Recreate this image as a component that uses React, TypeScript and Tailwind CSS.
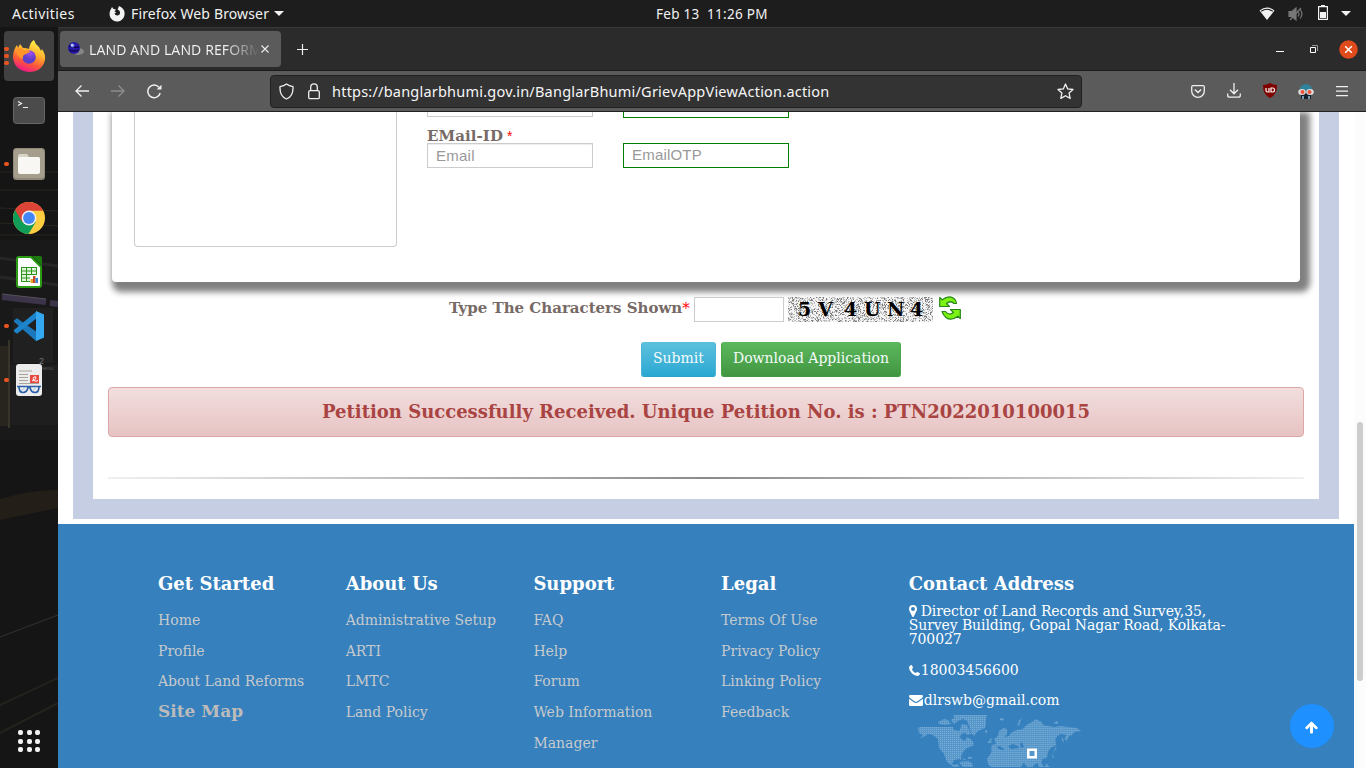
import React from "react";

const UI = "font-['Noto_Sans',sans-serif]";
const SERIF = "font-['DejaVu_Serif',serif]";

/* ---------- top system bar ---------- */

function SystemBar() {
  return (
    <header className={`flex h-[27px] shrink-0 items-center bg-[#1d1d1d] text-[14px] leading-[27px] text-[#f2f2f2] ${UI}`}>
      <div className="w-[109px] pl-3 tracking-[0.45px]">Activities</div>
      <svg width="16" height="16" viewBox="0 0 16 16" fill="#f2f2f2">
        <path d="M2 3 L3 1 L4.5 3 L7 3.4 L5.5 5.4 L7.4 6.4 L5.6 7.2 C6 9.8 9.5 10.3 10.8 8 C11.6 6.2 10.5 4.2 8.6 3.6 L10 0 C14 1.6 16 4.8 15.6 8.4 C15 12.8 11.6 15.6 7.8 15.4 C3.6 15.2 .5 12 .6 8 C.6 6 1 4.6 2 3Z" />
      </svg>
      <div className="ml-[6px] w-[138px] whitespace-nowrap tracking-[0.14px]">Firefox Web Browser</div>
      <svg className="ml-[5px]" width="10" height="6" viewBox="0 0 10 6" fill="#f2f2f2"><path d="M0 0h10L5 5z" /></svg>
      <div className="ml-[372px] w-[112px] whitespace-pre text-[13.500px] leading-[26px] tracking-[0.27px]">Feb 13  11:26 PM</div>
      <div className="ml-auto flex items-center pr-[15px]">
        <svg width="16" height="14" viewBox="0 0 16 14"><path d="M.5 3.6Q8-2.4 15.5 3.6L8 13z" fill="#f2f2f2" /><path d="M2.2 4.3Q8 .3 13.8 4.3" stroke="#1d1d1d" strokeWidth="1.1" fill="none" /></svg>
        <svg className="ml-[13px]" width="16" height="14" viewBox="0 0 16 14" fill="none" stroke="#777" strokeWidth="1.2">
          <path d="M1 4.5h3L8 1v12L4 9.5H1z" fill="#777" /><path d="M10 4.5q2 2.5 0 5M12.2 2.5q3.4 4.5 0 9M2 13L13 1" />
        </svg>
        <svg className="ml-[14px] -mt-[2px]" width="10" height="15" viewBox="0 0 10 15"><path d="M3 0h4v1H3zM0 1h10v14H0zM1.200 2.200v11.600h7.600V2.200z" fill="#f2f2f2" fillRule="evenodd" /><path d="M2 7h6v6H2z" fill="#f2f2f2" /></svg>
        <svg className="ml-[13px]" width="10" height="5" viewBox="0 0 10 5" fill="#f2f2f2"><path d="M0 0h10L5 5z" /></svg>
      </div>
    </header>
  );
}

/* ---------- dock ---------- */

const FirefoxIcon = () => (
  <svg width="34" height="34" viewBox="0 0 34 34">
    <defs>
      <linearGradient id="ff" x1=".75" y1="0" x2=".35" y2="1">
        <stop offset="0" stopColor="#fff44f" /><stop offset=".4" stopColor="#ffb52e" /><stop offset=".7" stopColor="#ff5a36" /><stop offset="1" stopColor="#f0158a" />
      </linearGradient>
      <radialGradient id="fp" cx=".6" cy=".2"><stop offset="0" stopColor="#a24cf0" /><stop offset="1" stopColor="#5b3fc8" /></radialGradient>
    </defs>
    <path d="M3 9 L5 6 L6 9 L8 5 L11 9 Q15 9 17 10 Q18 3 22 1 Q23 5 27 8 Q28 10 29 12 L30 10 Q34 16 33 21 Q30 33 17 33 Q3 32 1 19 Q1 13 3 9Z" fill="url(#ff)" />
    <circle cx="17" cy="18" r="6.800" fill="url(#fp)" />
    <path d="M4 11 Q8 7 12 11 Q17 10 18 13 L14 15 Q10 16 11 20 Q5 18 4 11Z" fill="#ff9528" />
  </svg>
);
const TerminalIcon = () => (
  <svg width="32" height="27" viewBox="0 0 32 27"><rect x=".5" y=".5" width="31" height="26" rx="3" fill="#4b4b4b" stroke="#676767" /><path d="M5 4.5l3.500 2L5 8.500M10 10.500h5" stroke="#eee" strokeWidth="1.200" fill="none" /></svg>
);
const FilesIcon = () => (
  <svg width="32" height="32" viewBox="0 0 32 32"><rect width="32" height="32" rx="3.500" fill="#918a7a" /><rect y="1" x="1" width="30" height="29" rx="3" fill="#a59e8d" /><path d="M5 8q0-2 2-2h7l2 3h9q2 0 2 2v4H5z" fill="#d8d5c8" /><rect x="5" y="9" width="22" height="17" rx="2" fill="#f8f7f4" /></svg>
);
const ChromeIcon = () => (
  <svg width="32" height="32" viewBox="0 0 32 32">
    <circle cx="16" cy="16" r="16" fill="#ffcd40" />
    <path d="M16 16 L22.800 20 L15.500 32 A16 16 0 0 1 2.300 7.700z" fill="#0f9d58" />
    <path d="M16 16 L9.200 20 L2.100 8 A16 16 0 0 1 30.200 8.700 H16z" fill="#db4437" />
    <circle cx="16" cy="16" r="7.400" fill="#f1f1f1" /><circle cx="16" cy="16" r="5.900" fill="#4285f4" />
  </svg>
);
const CalcIcon = () => (
  <svg width="26" height="32" viewBox="0 0 26 32">
    <path d="M3 1h12l10 10v18q0 2-2 2H3q-2 0-2-2V3q0-2 2-2z" fill="#fff" stroke="#2a9b12" strokeWidth="2" /><path d="M16 0h8q2 0 2 2v8z" fill="#1e7a10" />
    <path d="M5 11h16v15H5z" fill="#2b9418" /><path d="M6 12h4v2.500H6zM11 12h4v2.500h-4zM16 12h4v2.500h-4zM6 15.500h4v2.500H6zM11 15.500h4v2.500h-4zM16 15.500h4v2.500h-4zM6 19h4v2.500H6zM11 19h4v2.500h-4zM6 22.500h4v2.500H6zM11 22.500h4v2.500h-4z" fill="#e2f4dc" />
    <path d="M14 19h8v8h-8z" fill="#fff" /><path d="M14.500 23h2.500v4h-2.500z" fill="#e8a020" /><path d="M17 20h2.500v7H17z" fill="#c44a2c" /><path d="M19.500 22H22v5h-2.500z" fill="#3b82d0" />
  </svg>
);
const CodeIcon = () => (
  <svg width="30" height="30" viewBox="0 0 30 30"><path d="M0 9.500L3 7.200 30 26 22 30 0 10.800z" fill="#1b78bd" /><path d="M0 20.500L3 22.800 23 7V0L0 19z" fill="#1b84cc" /><path d="M22 0l8 3.500v23L22 30V7.500z" fill="#33a7ef" /></svg>
);
const ReaderIcon = () => (
  <svg width="26" height="32" viewBox="0 0 26 32"><rect width="26" height="32" rx="3" fill="#ececec" /><path d="M3 7h13M3 10.500h9M3 13.500h9M3 16.500h9M3 19.500h20" stroke="#aaa59b" /><path d="M14 11h9v8h-9z" fill="#e8483f" /><path d="M16 17q4-1 4-3t-2-1q-2 2 0 3.500t4 0" stroke="#fff" fill="none" /><path d="M1 22.500h11q1 .8 2 0h11M3 22.500q0 6 4 6 4 0 5-5M14 23.500q1 5 5 5 4 0 4-6" fill="none" stroke="#2c5ea6" strokeWidth="1.700" /><path d="M5 27l5-4M16 27l5-4" stroke="#a9c7ee" /></svg>
);

function Dock() {
  const items = [
    { icon: <FirefoxIcon />, dots: 3, active: true },
    { icon: <TerminalIcon />, dots: 0 },
    { icon: <FilesIcon />, dots: 1 },
    { icon: <ChromeIcon />, dots: 0 },
    { icon: <CalcIcon />, dots: 0 },
    { icon: <CodeIcon />, dots: 1 },
    { icon: <ReaderIcon />, dots: 1 },
  ];
  return (
    <nav className="relative flex w-[58px] shrink-0 flex-col overflow-hidden bg-[#151515] pt-[2px]">
      <svg className="absolute left-0 top-0" width="58" height="741" viewBox="0 27 58 741" fill="none">
        <path d="M0 172h58M0 190h58M0 208l58 3M0 223l58 3M0 235h58" stroke="#292620" />
        <path d="M0 240h58v200H0z" fill="#191919" />
        <path d="M0 258l58 8M0 277l58 8" stroke="#262626" strokeWidth="3" />
        <path d="M2 297l44 5M50 303l8 1" stroke="#3c3549" strokeWidth="6" /><path d="M2 294l44 5" stroke="#57515c" />
        <path d="M13 308h40v55H13z" fill="#202020" /><path d="M0 346h9v80H0z" fill="#28251e" /><path d="M9 340v88" stroke="#37342b" strokeWidth="2" />
        <path d="M10 365h48v60H10z" fill="#1d1e1d" />
        <path d="M0 499q30-9 58-9v18L0 520z" fill="#231e17" /><path d="M0 637l58-22" stroke="#323232" /><path d="M0 705l58-27M0 733l58-30" stroke="#24221d" strokeWidth="2" />
        <text x="39" y="364" fontSize="9" fill="#777" fontFamily="Liberation Sans">2</text>
        <text x="40" y="370" fontSize="6" fill="#555" fontFamily="Liberation Sans">venu</text>
      </svg>
      {items.map((it, i) => (
        <div key={i} className="relative flex h-[54px] items-center justify-center">
          <div className={it.active ? "flex size-[50px] items-center justify-center rounded-[4px] bg-[#414141] pb-px" : "flex"}>{it.icon}</div>
          <div className="absolute left-[4px] top-0 flex h-full flex-col items-center justify-center gap-[2.500px]">
            {Array.from({ length: it.dots }, (_, d) => <i key={d} className="size-[4.500px] rounded-full bg-[#e95420]" />)}
          </div>
        </div>
      ))}
      <div className="relative mt-auto mb-[16px] ml-[18px] grid w-[22px] grid-cols-3 gap-[3.500px]">
        {Array.from({ length: 9 }, (_, d) => <i key={d} className="size-[5px] rounded-[2px] bg-[#f2f2f2]" />)}
      </div>
    </nav>
  );
}

/* ---------- browser chrome ---------- */

function TabStrip() {
  return (
    <div className={`flex h-[44px] shrink-0 items-center border-b border-t border-b-[#1c1c1c] border-t-[#383838] bg-[#2b2b2b] ${UI}`}>
      <div className="ml-[2px] flex h-[36px] w-[221px] items-center rounded-[4px] bg-[#5b5b5b] pl-[7px]">
        <svg width="18" height="16" viewBox="0 0 18 16"><ellipse cx="11" cy="10.500" rx="6" ry="3.500" fill="#858585" /><circle cx="7" cy="7" r="6" fill="#2718a8" /><path d="M2 5q5 2 10 1M2 9q5 2 10 0" stroke="#100858" fill="none" strokeWidth="1.500" /><circle cx="5.500" cy="4.500" r="2" fill="#6d83e6" /><circle cx="5" cy="4" r=".9" fill="#e8eeff" /></svg>
        <span className="ml-[4px] mt-px w-[169px] whitespace-nowrap bg-[linear-gradient(90deg,#f2f2f2_80%,#5b5b5b_101%)] bg-clip-text text-[14px] leading-[20px] tracking-[0.08px] text-transparent">LAND AND LAND REFORM</span>
        <svg className="ml-[3px]" width="8" height="8" viewBox="0 0 8 8"><path d="M.5.500l7 7M7.500.500l-7 7" stroke="#eee" strokeWidth="1.100" /></svg>
      </div>
      <svg className="ml-[16px]" width="11" height="11" viewBox="0 0 11 11"><path d="M5.500 0v11M0 5.500h11" stroke="#eee" strokeWidth="1.200" /></svg>
      <div className="ml-auto flex items-center pr-[8px]">
        <i className="mt-[5px] h-px w-[8px] bg-white" />
        <svg className="ml-[26px]" width="8" height="8" viewBox="0 0 8 8" fill="none"><path d="M.5 2.500h5v5h-5z" stroke="#fff" /><path d="M2 .5h5.500V6" stroke="#999" /></svg>
        <svg className="ml-[21px]" width="19" height="19" viewBox="0 0 19 19"><circle cx="9.500" cy="9.500" r="9.300" fill="#df4b1b" /><path d="M6.200 6.200l6.600 6.600M12.800 6.200l-6.600 6.600" stroke="#fff" strokeWidth="1.500" /></svg>
      </div>
    </div>
  );
}

function AddressBar() {
  const line = { fill: "none", stroke: "#f0f0f0", strokeWidth: 1.3 };
  return (
    <div className={`flex h-[41px] shrink-0 items-center border-b border-[#212121] bg-[#5b5b5b] ${UI}`}>
      <svg className="ml-[17px]" width="14" height="12" viewBox="0 0 14 12" {...line}><path d="M14 6H1M6.500.500L1 6l5.500 5.500" /></svg>
      <svg className="ml-[22px]" width="14" height="12" viewBox="0 0 14 12" {...line} stroke="#8d8d8d"><path d="M0 6h13M7.500.500L13 6l-5.500 5.500" /></svg>
      <svg className="ml-[22px]" width="15" height="15" viewBox="0 0 15 15" {...line}><path d="M13.200 9A6.300 6.300 0 1 1 12 3.400" strokeWidth="1.500" /><path d="M14.500.700V5.500H9.700z" fill="#f0f0f0" stroke="none" /></svg>
      <div className="ml-[108px] flex h-[33px] w-[812px] items-center rounded-[4px] border border-[#202020] bg-[#333]">
        <svg className="ml-[8px]" width="15" height="17" viewBox="0 0 15 17" {...line} strokeLinejoin="round"><path d="M7.500 1Q10 3 14 3.700 14.500 13 7.500 16 .5 13 1 3.700 5 3 7.500 1Z" /></svg>
        <svg className="ml-[14px]" width="12" height="17" viewBox="0 0 12 17" {...line}><rect x=".7" y="7.700" width="10.600" height="8" rx="1.300" /><path d="M2.700 7.500V4.200a3.300 3.300 0 0 1 6.600 0v3.300" /></svg>
        <span className="ml-[12px] whitespace-nowrap text-[14.500px] leading-[30px] tracking-[0.215px] text-[#f6f6f6]">https://banglarbhumi.gov.in/BanglarBhumi/GrievAppViewAction.action</span>
        <svg className="ml-auto mr-[7px]" width="17" height="17" viewBox="0 0 17 17" {...line} strokeLinejoin="round"><path d="M8.500 1l2.200 4.900 5.300.6-3.900 3.600 1.100 5.300-4.700-2.700-4.700 2.700 1.100-5.300L1 6.500l5.300-.6z" /></svg>
      </div>
      <div className="ml-auto flex items-center pr-[18px]">
        <svg width="14" height="13" viewBox="0 0 14 13" {...line}><path d="M2 .7h10q1.300 0 1.300 1.300v4a6.300 6.300 0 0 1-12.600 0V2Q.7.700 2 .7zM3.800 4.500L7 7.500l3.200-3" /></svg>
        <svg className="ml-[22px] -mt-[2px]" width="14" height="15" viewBox="0 0 14 15" {...line}><path d="M7 0v10.500M3 6.800l4 4 4-4M.7 10.500v1.700q0 2 2 2h8.600q2 0 2-2v-1.700" /></svg>
        <svg className="ml-[21px] -mt-px" width="16" height="15" viewBox="0 0 16 15"><path d="M8 0q3 1.800 7 2 0 10-7 13Q1 12 1 2 5 1.800 8 0z" fill="#800000" /><path d="M4 5v2.500q0 1.500 1.500 1.500H7V5M9 5h2q1.500 0 1.500 2T11 9H9z" fill="none" stroke="#fff" strokeWidth="1.200" /></svg>
        <svg className="ml-[19px]" width="18" height="15" viewBox="0 0 18 15"><path d="M2.500 7q0-6.500 6-7 6.500 0 7 7z" fill="#2f8299" /><path d="M4 9h10v6H4z" fill="#14212c" /><ellipse cx="5" cy="8" rx="3.800" ry="3" fill="#ddd" /><ellipse cx="13" cy="8" rx="3.800" ry="3" fill="#ddd" /><circle cx="5.500" cy="8" r="2" fill="#ee5138" /><circle cx="12.500" cy="8" r="2" fill="#ee5138" /><path d="M5 12h2v3H5zM11 12h2v3h-2z" fill="#7b9bad" /></svg>
        <svg className="ml-[21px]" width="12" height="11" viewBox="0 0 12 11"><path d="M0 .7h12M0 5.200h12M0 9.700h12" stroke="#f0f0f0" strokeWidth="1.200" /></svg>
      </div>
    </div>
  );
}

/* ---------- page ---------- */

function noisePath(w: number, h: number, density: number, start: number) {
  let seed = start;
  let d = "";
  for (let y = 0; y < h; y++)
    for (let x = 0; x < w; x++) {
      seed = (Math.imul(seed, 1664525) + 1013904223) >>> 0;
      if (seed / 4294967296 < density) d += `M${x} ${y}h1v1h-1z`;
    }
  return d;
}
const DARK = noisePath(145, 25, 0.14, 7);
const LIGHT = noisePath(145, 25, 0.36, 91);

function Captcha() {
  return (
    <svg className="ml-1" width="145" height="25" viewBox="0 0 145 25">
      <path d="M0 0h145v25H0z" fill="#f4f4f4" />
      <path d={LIGHT} fill="#bdbdbd" /><path d={DARK} fill="#7c7c7c" />
      <g fontFamily="DejaVu Serif" fontWeight="bold" fontSize="19" fill="#000">
        <text x="10" y="19">5</text><text x="30" y="19">V</text><text x="56" y="19">4</text><text x="76" y="19">U</text><text x="99" y="19">N</text><text x="122" y="19">4</text>
      </g>
    </svg>
  );
}

function PetitionForm() {
  return (
    <section className="ml-[15px] h-[407px] w-[1266px] border-x-[20px] border-b-[20px] border-[#c6cee3] bg-white">
      <div className="ml-[19px] flex h-[170px] w-[1188px] rounded-b-[4px] bg-white shadow-[5px_5px_6px_5px_#808080]">
        <div className="ml-[22px] h-[135px] w-[263px] rounded-b-[4px] border border-t-0 border-[#ccc]" />
        <div className="ml-[30px] w-[362px]">
          <div className="flex h-[6px] gap-[30px]">
            <div className="h-[5px] w-[166px] border border-t-0 border-[#ccc]" />
            <div className="h-[6px] w-[166px] border border-t-0 border-[#008000]" />
          </div>
          <div className={`flex h-[25px] items-center pt-[11px] text-[15px] font-bold tracking-[0.08px] text-[#776a66] ${SERIF}`}>
            <span>EMail-ID</span><span className="ml-1 font-['Liberation_Sans',sans-serif] text-[14px] font-normal text-[#f00]">*</span>
          </div>
          <div className="flex gap-[30px] font-['Liberation_Sans',sans-serif] text-[15px] text-[#999]">
            <div className="h-[25px] w-[166px] border border-[#ccc] pl-2 leading-[24px] tracking-[0.25px] shadow-[inset_0_1px_1px_rgba(0,0,0,0.075)]">Email</div>
            <div className="h-[25px] w-[166px] border border-[#008000] pl-2 leading-[22px] tracking-[0.2px]">EmailOTP</div>
          </div>
        </div>
      </div>
      <div className={`ml-[356px] mt-[14px] flex h-[27px] items-center ${SERIF}`}>
        <div className="h-[25px] w-[245px] whitespace-nowrap text-[15px] font-bold leading-[22px] text-[#776a66]">Type The Characters Shown<span className="font-normal text-[#f00]">*</span></div>
        <div className="h-[25px] w-[90px] border border-[#ccc] bg-white" />
        <Captcha />
        <svg className="-mt-[3px] ml-[6px]" width="22" height="24" viewBox="0 0 22 24" fill="#7cf312" stroke="#27851c" strokeWidth="1.200" strokeLinejoin="round">
          <path d="M.7 1.500L3.200 3.800Q10-1.500 15 2.500 17.500 4.500 17.500 7.500L15 7.500Q12 4 7.500 7.500L10.500 10.500H.7z" /><path d="M21.300 22.500L18.800 20.200Q12 25.500 7 21.500 4.500 19.500 3 15.500L6.500 15.500Q10 20 14.500 16.500L11.500 13.500h9.800z" />
        </svg>
      </div>
      <div className={`ml-[548px] mt-[19px] flex gap-[5px] text-[14px] text-[#f4fbfa] [text-shadow:0_-1px_0_rgba(0,0,0,0.2)] ${SERIF}`}>
        <button className="h-[35px] w-[75px] rounded-[3px] border border-x-[#4bb5d6] border-b-[#28a4c9] border-t-[#5bc0de] bg-gradient-to-b from-[#5bc0de] to-[#28a8d2] pb-[3px] leading-[30px]">Submit</button>
        <button className="h-[35px] w-[180px] rounded-[3px] border border-x-[#4ba54b] border-b-[#439943] border-t-[#5cb85c] bg-gradient-to-b from-[#5cb85c] to-[#419641] pb-[3px] leading-[30px]">Download Application</button>
      </div>
      <div className={`ml-[15px] mt-[10px] h-[50px] w-[1196px] rounded-[4px] border border-[#dca7a7] bg-gradient-to-b from-[#f2dede] to-[#e7c3c3] text-center text-[18px] font-bold leading-[48px] text-[#a94442] ${SERIF}`}>
        Petition Successfully Received. Unique Petition No. is : PTN2022010100015
      </div>
      <div className="ml-[15px] mt-[40px] h-[2px] w-[1196px] bg-[linear-gradient(90deg,#f0f0f0,#8c8b8b,#f0f0f0)]" />
    </section>
  );
}

const COLUMNS: { title: string; links: string[]; strong?: string }[] = [
  { title: "Get Started", links: ["Home", "Profile", "About Land Reforms"], strong: "Site Map" },
  { title: "About Us", links: ["Administrative Setup", "ARTI", "LMTC", "Land Policy"] },
  { title: "Support", links: ["FAQ", "Help", "Forum", "Web Information Manager"] },
  { title: "Legal", links: ["Terms Of Use", "Privacy Policy", "Linking Policy", "Feedback"] },
];

function WorldMap() {
  return (
    <svg className="ml-[8px] mt-[6px]" width="170" height="54" viewBox="0 0 170 54">
      <defs><pattern id="dots" width="2" height="2" patternUnits="userSpaceOnUse"><path d="M0 0h2v2H0z" fill="#4f92c7" /><path d="M0 0h1.300v1.300H0z" fill="#78abd5" /></pattern></defs>
      {/* North America, Greenland and the Arctic islands */}
      <g fill="url(#dots)" transform="translate(1 0)">
        <path d="M0 15l2-1h33l1 3 5 1 3-6 4 3-1 5-4 1-1 4 5 3 2-4 5 3 2 5-4 2-3 1-4 4-2 4v4l-2-1-5 1-2 4 2 1 4-1 1 3-4 1-8-6-3-8-5-6-1-9-5-4-5-1-4 3-4 1 3-3-4-2z" />
        <path d="M20 9l6-3 4 1 3 4-6 1-6-1zM33 7l6-4h10l-4 3-5 2-4 3zM43 11l6 1 3 7 1 2-4 1-4-5z" />
        <path d="M36 2h33l-1 4v5l-1 4-5 2-3 2-3 4-3-3-2-7-2-5-6-3-8-1z" />
        <path d="M67 17h2v3h-2zM82 5h4l-1 3-3-1zM42 45l6 1-1 1zM50 44h4v2h-4zM41 49l9-1 4 2 1 4H45z" />
      </g>
      {/* Eurasia and Africa */}
      <g fill="url(#dots)" transform="translate(6 1) scale(.925 1)">
        <path d="M75 37l6-2 5 1 1 4 7 1 8 1 2 5 5 1-3 5-3 2H77l-6-4-2-6z" />
        <path d="M74 36v-5l5-1-2-5 4-3 1-5 5-3 4 1v5l-3 3 5-1 2-3 6-3 7-1 4-4 6-3 4-3 6 3 2 3 5 1 7 1 7-1 8 1 9 1 5 3-7 1-3 3-3 1-3 5-2-2 2-4-6-1-4 2-2 4 1 5-6 3-3 4-1 6-5 1-1 4 3 4-4 3-3-7-4 2-4 6-4-5-3-3-5-1-3 5-6 1-4-6-2-4-6-1-3-3-6 2z" />
        <path d="M102 11l2-5 3-2-2 4-1 4zM142 8l4-1v3h-4zM150 22l2 4v3l-2-3zM144 31v4l-3 3zM140 39l2 5h-2zM125 48l3 5h-3zM133 49l4 4h-5zM72 25l2-1v5h-2zM70 27h2v2h-2z" />
      </g>
      <path d="M79 34l4-1 5 4h-4zM91 33l5-2 5 2 1 2-8 1zM103 31l2-2 2 5-3 1z" fill="#3580bd" />
      <path d="M111.250 35.250h7.500v7.500h-7.500z" transform="translate(0 1.500)" fill="#5798ca" stroke="#fff" strokeWidth="2.500" />
    </svg>
  );
}

function Footer() {
  return (
    <footer className={`mt-[5px] flex h-[244px] bg-[#3580bd] pl-[100px] pt-[49px] ${SERIF}`}>
      {COLUMNS.map((c) => (
        <div key={c.title} className="w-[187.700px]">
          <h4 className="text-[18px] font-bold leading-[22px] text-white">{c.title}</h4>
          <ul className="mt-[10px] text-[14px] leading-[30.700px] text-[#c6cacd]">
            {c.links.map((l) => <li key={l} className={l.startsWith("Web") ? "w-[140px]" : ""}>{l}</li>)}
            {c.strong && <li className="-mt-px text-[17px] font-bold text-[#bbb]">{c.strong}</li>}
          </ul>
        </div>
      ))}
      <div className="w-[330px] text-[14px] leading-[14px] text-white">
        <h4 className="text-[18px] font-bold leading-[22px]">Contact Address</h4>
        <p className="mt-[9px] w-[322px] tracking-[-0.1px]">
          <svg className="mr-[4px] inline align-[-1px]" width="8" height="12" viewBox="0 0 8 12" fill="#fff"><path fillRule="evenodd" d="M4 0a4 4 0 0 1 4 4Q8 5 7.500 6L4.800 11.400Q4 12.400 3.200 11.400L.5 6Q0 5 0 4A4 4 0 0 1 4 0zM4 2a2 2 0 1 0 0 4 2 2 0 0 0 0-4z" /></svg>
          Director of Land Records and Survey,35, Survey Building, Gopal Nagar Road, Kolkata-700027
        </p>
        <p className="mt-[17px] flex items-center">
          <svg className="mr-px" width="11" height="11" viewBox="0 0 11 11" fill="#fff"><path d="M2.300 0Q3 0 3.200.7L4 2.800Q4 3.300 3.200 3.800L2.900 4.400Q4.300 7 6.700 8.100L8 6.900Q8.400 6.800 10.800 8.200 11.200 8.500 10.700 9.600 10 11 8.500 11 5.500 11 2.800 8.200 0 5.300 0 2.600 0 .5 2.300 0z" /></svg>
          18003456600
        </p>
        <p className="mt-[16px] flex items-center">
          <svg className="mr-px" width="14" height="11" viewBox="0 0 14 11" fill="#fff"><path d="M1.200 0h11.600Q14 0 14 1.200 14 2.400 12.800 3.300L8.500 6.300Q7 7.300 5.500 6.300L1.200 3.300Q0 2.400 0 1.200 0 0 1.200 0zM0 3.700L4.800 7.200Q7 8.700 9.200 7.200L14 3.700V9.800Q14 11 12.800 11H1.200Q0 11 0 9.800z" /></svg>
          dlrswb@gmail.com
        </p>
        <WorldMap />
      </div>
    </footer>
  );
}

export default function App() {
  return (
    <div className="flex h-[768px] w-[1366px] flex-col overflow-hidden">
      <SystemBar />
      <div className="flex min-h-0 flex-1">
        <Dock />
        <div className="flex min-w-0 flex-1 flex-col">
          <TabStrip />
          <AddressBar />
          <main className="flex min-h-0 flex-1 bg-white">
            <div className="relative w-[1296px] overflow-hidden">
              <PetitionForm />
              <Footer />
              <button className="absolute bottom-[20px] right-[20px] flex size-[44px] items-center justify-center rounded-full bg-[#1e90ff]">
                <svg className="mr-px mt-[3px]" width="13" height="13" viewBox="0 0 14 13" fill="#fff"><path d="M6.200.500Q7-.3 7.800.500L13.500 6.200Q14 6.900 13.500 7.500L12.800 8.200Q12 8.800 11.300 8.200L8.600 5.500V12q0 1-1 1H6.400q-1 0-1-1V5.500L2.700 8.200Q2 8.800 1.200 8.200L.5 7.500Q0 6.900.5 6.200z" /></svg>
              </button>
            </div>
            <div className="w-[12px] bg-[#fcfcfc] pl-[3px] pt-[310px]"><div className="h-[259px] w-[6px] rounded-full bg-[#cdcdcd]" /></div>
          </main>
        </div>
      </div>
    </div>
  );
}
